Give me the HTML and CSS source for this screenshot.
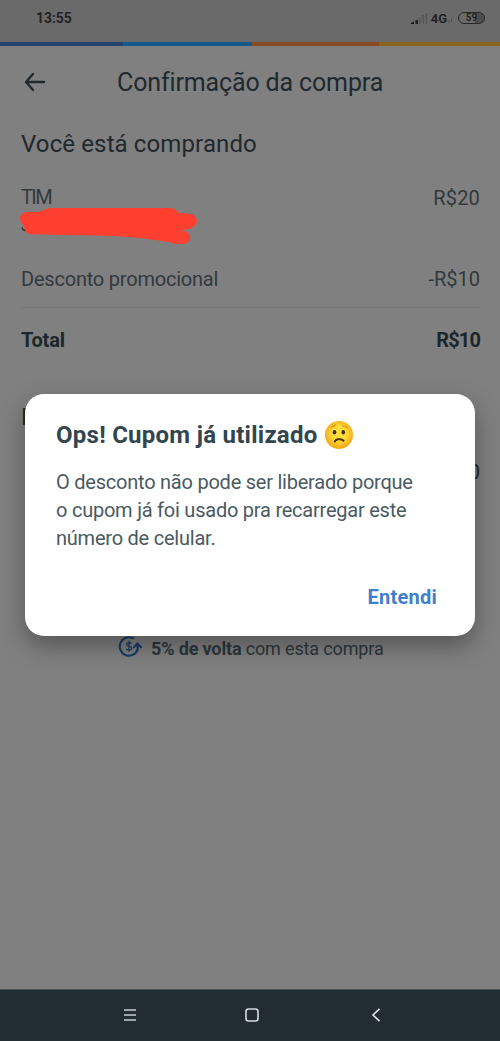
FILE: index.html
```html
<!DOCTYPE html>
<html lang="pt-BR">
<head>
<meta charset="utf-8">
<title>Confirmação da compra</title>
<link rel="stylesheet" href="styles.css">
</head>
<body>
<div class="phone">
  <div class="status">
    <span class="clock">13:55</span>
    <div class="indicators">
      <svg class="signal" width="17" height="13" viewBox="0 0 17 13"><path d="M0 12V11L3 9.5V12Z" fill="#171717"/><path d="M4.5 12V8H7V12Z" fill="#202020"/><path d="M9 12V5M12.3 12V3M15.5 12V1" stroke="#555" stroke-width="1.5"/></svg>
      <span class="network">4G</span>
      <svg class="data" width="5" height="6" viewBox="0 0 5 6"><path d="M1 5V2M3.5 4V1" stroke="#505050"/></svg>
      <span class="battery">59</span>
    </div>
  </div>
  <div class="stripe"><i class="navy"></i><i class="blue"></i><i class="orange"></i><i class="yellow"></i></div>
  <header class="header">
    <svg class="back" width="22" height="20" viewBox="0 0 22 20"><path d="M9 2L2 10L9 18M2 10H20" fill="none" stroke="#20292e" stroke-width="2.4" stroke-linecap="round" stroke-linejoin="round"/></svg>
    <h1 class="title">Confirmação da compra</h1>
  </header>
  <main class="content">
    <h2 class="heading">Você está comprando</h2>
    <div class="row item"><span class="tim">TIM</span><span class="amount">R$20</span></div>
    <svg class="scribble" width="182" height="38" viewBox="0 0 184 39" preserveAspectRatio="none">
      <path d="M4 20Q5 24 9 23" fill="none" stroke="#34393b" stroke-width="1.5"/>
      <path d="M9 4C1 4 0 13 6 18C7 24 8 27 14 27L60 28C94 28 124 30 153 35C160 38 173 38 174 32C175 27 172 24 165 23C170 22 176 22 180 17C183 12 179 6 173 6L163 5C159 1 157 0 153 0L32 0C27 1 25 3 20 4Z" fill="#ff4030"/>
    </svg>
    <div class="row discount"><span class="promo">Desconto promocional</span><span class="amount minus">-R$10</span></div>
    <div class="row total"><span class="sum">Total</span><span class="sumvalue">R$10</span></div>
    <div class="payment">F</div>
    <div class="paid">0</div>
    <div class="cashback">
      <svg width="24" height="23" viewBox="0 0 24 23"><path d="M15 2.2A9.2 9.2 0 1 0 19.5 14V8M16 11.2L19.5 7.5L23 11.2" fill="none" stroke="#1c3f68" stroke-width="2.2" stroke-linecap="round" stroke-linejoin="round"/><path d="M13.6 8C12.8 6.2 8.5 6.3 8.6 8.5C8.7 11 13.7 9.7 13.7 12.2C13.7 14.7 9 14.7 8.2 12.7M11 4.8V15.8" fill="none" stroke="#1c3f68" stroke-width="1.3"/></svg>
      <span class="cashtext"><b>5% de volta</b><span class="cashrest"> com esta compra</span></span>
    </div>
  </main>
  <nav class="nav">
    <svg width="14" height="14" viewBox="0 0 14 14"><path d="M1 2H13M1 7H13M1 12H13" stroke="#c8cdcf" stroke-width="1.7"/></svg>
    <svg width="14" height="14" viewBox="0 0 14 14"><rect x="1" y="1" width="12" height="12" rx="2.5" fill="none" stroke="#d6dadb" stroke-width="1.6"/></svg>
    <svg width="14" height="14" viewBox="0 0 14 14"><path d="M11.5 .8L5 7L11.5 13.2" fill="none" stroke="#e0e3e4" stroke-width="1.6"/></svg>
  </nav>
  <section class="dialog">
    <div class="dialog-head">
      <h3 class="dialog-title">Ops! Cupom já utilizado</h3>
      <svg width="30" height="30" viewBox="0 0 30 30">
        <defs><radialGradient id="face" cy=".45"><stop offset=".5" stop-color="#ffdd38"/><stop offset="1" stop-color="#f6ac1c"/></radialGradient></defs>
        <circle cx="15" cy="15" r="14" fill="url(#face)"/>
        <path d="M7 7Q9.5 6.8 11.5 4.8M18.5 6Q21 5.8 23 7.5" fill="none" stroke="#d98918" stroke-width="1.2" stroke-linecap="round"/>
        <ellipse cx="10.5" cy="12.3" rx="1.8" ry="2.2" fill="#422c16"/><ellipse cx="19.3" cy="12.3" rx="1.8" ry="2.2" fill="#422c16"/>
        <path d="M10.8 21.5Q12 18.8 15 19.2Q18.5 19 19.5 20.8" fill="none" stroke="#493015" stroke-width="2" stroke-linecap="round"/>
      </svg>
    </div>
    <p class="message"><span class="l1">O desconto não pode ser liberado porque</span><br><span class="l2">o cupom já foi usado pra recarregar este</span><br><span class="l3">número de celular.</span></p>
    <div class="action">Entendi</div>
  </section>
</div>
</body>
</html>
```
FILE: styles.css
```css
* { box-sizing: border-box; }
body { margin: 0; font-family: Roboto, "Liberation Sans", sans-serif; color: #20292e; }
h1, h2, h3, p { margin: 0; font-weight: 400; }
svg { display: block; flex: none; }
.phone { position: relative; display: flex; flex-direction: column; width: 500px; height: 1041px; background: #808080; overflow: hidden; }
.status { display: flex; justify-content: space-between; height: 42px; padding: 9px 15px 0 36px; background: #6a6a6a; line-height: 19px; color: #202020; }
.clock { font-size: 14px; font-weight: 600; }
.indicators { display: flex; align-items: center; height: 18px; }
.network { margin-left: 3px; font-size: 13px; font-weight: 600; }
.data { margin: 5px 5px 0 1px; }
.battery { width: 27px; height: 12px; border: 1.5px solid #292929; border-radius: 6px; background: linear-gradient(90deg, #6a6a6a 65%, #4d4d4d 65%); font-size: 10px; font-weight: 600; line-height: 10px; text-align: center; }
.stripe { display: flex; height: 4px; }
.stripe i { flex: none; }
.navy { width: 123px; background: #21436d; }
.blue { width: 129px; background: #165a89; }
.orange { width: 127px; background: #894b22; }
.yellow { width: 121px; background: #8b641d; }
.header { display: flex; align-items: center; height: 73px; padding-left: 24px; }
.back { margin-top: -2px; }
.title { margin-left: 71px; font-size: 25px; letter-spacing: -.14px; white-space: nowrap; }
.content { flex: 1; padding: 0 20px 0 21px; }
.heading { height: 58px; padding-top: 9px; font-size: 24px; line-height: 32px; letter-spacing: .12px; }
.row { display: flex; justify-content: space-between; font-size: 20px; line-height: 24px; color: #32393d; }
.item { height: 31px; padding-top: 8px; }
.amount { padding-top: 2px; letter-spacing: 0; }
.item .amount { padding-top: 1px; letter-spacing: .15px; }
.item .tim { letter-spacing: -1.6px; }
.scribble { margin-left: -3px; }
.discount { height: 62px; padding-top: 21px; border-bottom: 1px solid #777; }
.discount .amount { padding: 0; }
.promo { letter-spacing: -.21px; }
.total { height: 91px; padding-top: 20px; font-weight: 700; color: #1c272c; }
.sum { letter-spacing: -.2px; }
.sumvalue { letter-spacing: -.9px; }
.payment { height: 61px; font-size: 24px; line-height: 36px; }
.paid { height: 24px; font-size: 20px; line-height: 24px; text-align: right; }
.cashback { display: flex; align-items: center; height: 24px; margin: 151px 0 0 97px; font-size: 18px; letter-spacing: -.15px; color: #2c373c; white-space: nowrap; }
.cashtext { margin-left: 9px; padding-top: 3px; }
.nav { display: grid; grid-template-columns: 122px 123px 14px; height: 52px; padding: 0 0 2px 123px; align-items: center; background: #212d33; border-top: 1px solid #48555a; }
.dialog { position: absolute; left: 25px; top: 394px; width: 450px; height: 242px; padding: 26px 38px 0 31px; border-radius: 19px; background: #fff; box-shadow: 0 10px 24px rgba(0, 0, 0, .34); color: #33454d; white-space: nowrap; }
.dialog-head { display: flex; align-items: center; gap: 6px; height: 30px; }
.dialog-title { width: 262px; font-size: 24px; font-weight: 700; letter-spacing: .26px; }
.message { margin-top: 18px; font-size: 20px; line-height: 28px; letter-spacing: -.23px; color: #4a5a61; }
.action { margin-top: 32px; font-size: 20px; font-weight: 700; line-height: 26px; letter-spacing: .25px; text-align: right; color: #3f7fcb; }
```
